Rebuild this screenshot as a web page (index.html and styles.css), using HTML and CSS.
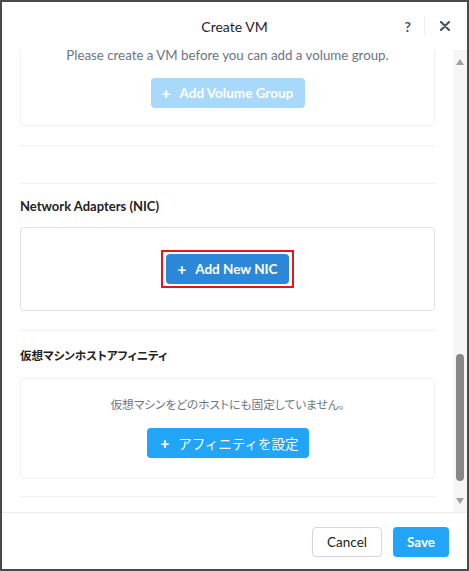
FILE: index.html
```html
<!DOCTYPE html>
<html lang="ja">
<head>
<meta charset="utf-8">
<title>Create VM</title>
<link rel="stylesheet" href="styles.css">
</head>
<body>
<div class="dialog">
  <header class="header">
    <div></div>
    <div class="title">Create VM</div>
    <div class="actions">
      <span class="help">?</span>
      <span class="divider"></span>
      <svg class="close" width="10" height="10" viewBox="0 0 10 10"><path d="M1 1L9 9M9 1L1 9" stroke="#4a5466" stroke-width="2.2" stroke-linecap="round"/></svg>
    </div>
  </header>
  <div class="main">
    <div class="content">
      <div class="scroller">
        <section class="section first">
          <div class="card card-vg">
            <p class="msg">Please create a VM before you can add a volume group.</p>
            <button class="btn btn-disabled"><span class="plus">+</span>Add Volume Group</button>
          </div>
        </section>
        <section class="section empty"></section>
        <section class="section">
          <h3 class="heading">Network Adapters (NIC)</h3>
          <div class="card card-nic">
            <div class="highlight">
              <button class="btn btn-primary"><span class="plus">+</span>Add New NIC</button>
            </div>
          </div>
        </section>
        <section class="section affinity">
          <h3 class="heading jp">仮想マシンホストアフィニティ</h3>
          <div class="card card-aff">
            <p class="msg jp">仮想マシンをどのホストにも固定していません。</p>
            <button class="btn btn-blue jpbtn"><span class="plus">+</span>アフィニティを設定</button>
          </div>
        </section>
      </div>
    </div>
    <div class="scrollbar">
      <div class="arrow-box up"><span class="tri-up"></span></div>
      <div class="track"><div class="thumb"></div></div>
      <div class="arrow-box down"><span class="tri-down"></span></div>
    </div>
  </div>
  <footer class="footer">
    <button class="fbtn cancel">Cancel</button>
    <button class="fbtn save">Save</button>
  </footer>
</div>
</body>
</html>
```

FILE: styles.css
```css
* { box-sizing: border-box; }
html, body { margin: 0; padding: 0; background: #fff; }
body {
  font-family: Lato, "Noto Sans CJK JP", sans-serif;
  color: #222;
}
.dialog {
  width: 469px;
  height: 571px;
  border: 2px solid #4a4a4a;
  display: flex;
  flex-direction: column;
  background: #fff;
}
.header {
  height: 48px;
  flex: none;
  display: grid;
  grid-template-columns: 1fr auto 1fr;
  align-items: center;
}
.title {
  font-size: 14px;
  color: #1f2329;
}
.actions {
  display: flex;
  align-items: center;
  justify-content: flex-end;
  padding-right: 17px;
}
.help {
  font-size: 14px;
  font-weight: 700;
  color: #4a5466;
}
.divider {
  width: 1px;
  height: 20px;
  background: #eceef0;
  margin: 0 15px 0 13px;
}
.close { display: block; }
.main {
  flex: 1;
  display: flex;
  min-height: 0;
}
.content {
  flex: 1;
  overflow: hidden;
}
.scroller {
  margin-top: -20px;
}
.section {
  margin: 0 18px;
  border-bottom: 1px solid #eef0f2;
  padding: 12px 0 19px;
}
.section.first { padding-top: 0; }
.section.empty { height: 38px; padding: 0; }
.section.affinity { padding-top: 14px; padding-bottom: 17px; }
.heading {
  margin: 0 0 11px;
  font-size: 13px;
  line-height: 20px;
  font-weight: 700;
  color: #222;
}
.jp {
  font-family: "Noto Sans CJK JP", sans-serif;
  font-feature-settings: "palt";
}
.heading.jp { font-size: 11.5px; margin-bottom: 13px; }
.card {
  border: 1px solid #eef0f2;
  border-radius: 4px;
  display: flex;
  flex-direction: column;
  align-items: center;
}
.card-vg { padding: 16px 0 17px; }
.card-nic { border-color: #dfe3e8; padding: 22px 0; }
.card-aff { padding: 17px 0 20px; }
.msg {
  margin: 0 0 15px;
  font-size: 13.3px;
  line-height: 16px;
  color: #6b7482;
  white-space: nowrap;
}
.msg.jp { font-size: 11.7px; }
.card-aff .msg { margin-bottom: 16px; }
.btn {
  border: none;
  border-radius: 4px;
  height: 30px;
  padding: 0;
  font-family: Lato, "Noto Sans CJK JP", sans-serif;
  font-size: 13.5px;
  font-weight: 700;
  color: #fff;
  display: flex;
  align-items: center;
  justify-content: center;
  white-space: nowrap;
}
.plus {
  font-size: 15px;
  font-weight: 900;
  margin-right: 9px;
}
.btn-disabled { background: #a8d9fa; width: 154px; }
.btn-primary { background: #2b87d8; width: 123px; }
.highlight {
  border: 2px solid #e8141b;
  padding: 2px 3px;
}
.btn-blue {
  background: #22a5f6;
  width: 162px;
  height: 30px;
  font-weight: 400;
  font-size: 13.5px;
}
.jpbtn { font-family: "Noto Sans CJK JP", sans-serif; padding-left: 4px; }
.jpbtn .plus { font-family: Lato, sans-serif; margin-right: 9px; }
.scrollbar {
  width: 14px;
  flex: none;
  background: #f5f5f5;
  display: flex;
  flex-direction: column;
  align-items: center;
}
.arrow-box {
  flex: none;
  display: flex;
  align-items: center;
  justify-content: center;
}
.arrow-box.up { height: 24px; }
.arrow-box.down { height: 22px; }
.tri-up {
  width: 0; height: 0;
  border-left: 4px solid transparent;
  border-right: 4px solid transparent;
  border-bottom: 6px solid #a0a0a0;
}
.tri-down {
  width: 0; height: 0;
  border-left: 4px solid transparent;
  border-right: 4px solid transparent;
  border-top: 6px solid #a0a0a0;
}
.track {
  flex: 1;
  display: flex;
  flex-direction: column;
  justify-content: flex-end;
  padding-bottom: 9px;
}
.thumb {
  width: 8px;
  height: 127px;
  border-radius: 4px;
  background: #878787;
}
.footer {
  height: 57px;
  flex: none;
  border-top: 1px solid #eceef0;
  display: flex;
  justify-content: flex-end;
  align-items: flex-start;
  padding: 14px 18px 0 0;
  gap: 11px;
}
.fbtn {
  height: 30px;
  border-radius: 4px;
  font-family: Lato, sans-serif;
  font-size: 13.5px;
}
.cancel {
  width: 70px;
  background: #fff;
  border: 1px solid #d3d8de;
  color: #222;
}
.save {
  width: 56px;
  background: #22a5f6;
  border: none;
  color: #fff;
  font-weight: 700;
}
```
